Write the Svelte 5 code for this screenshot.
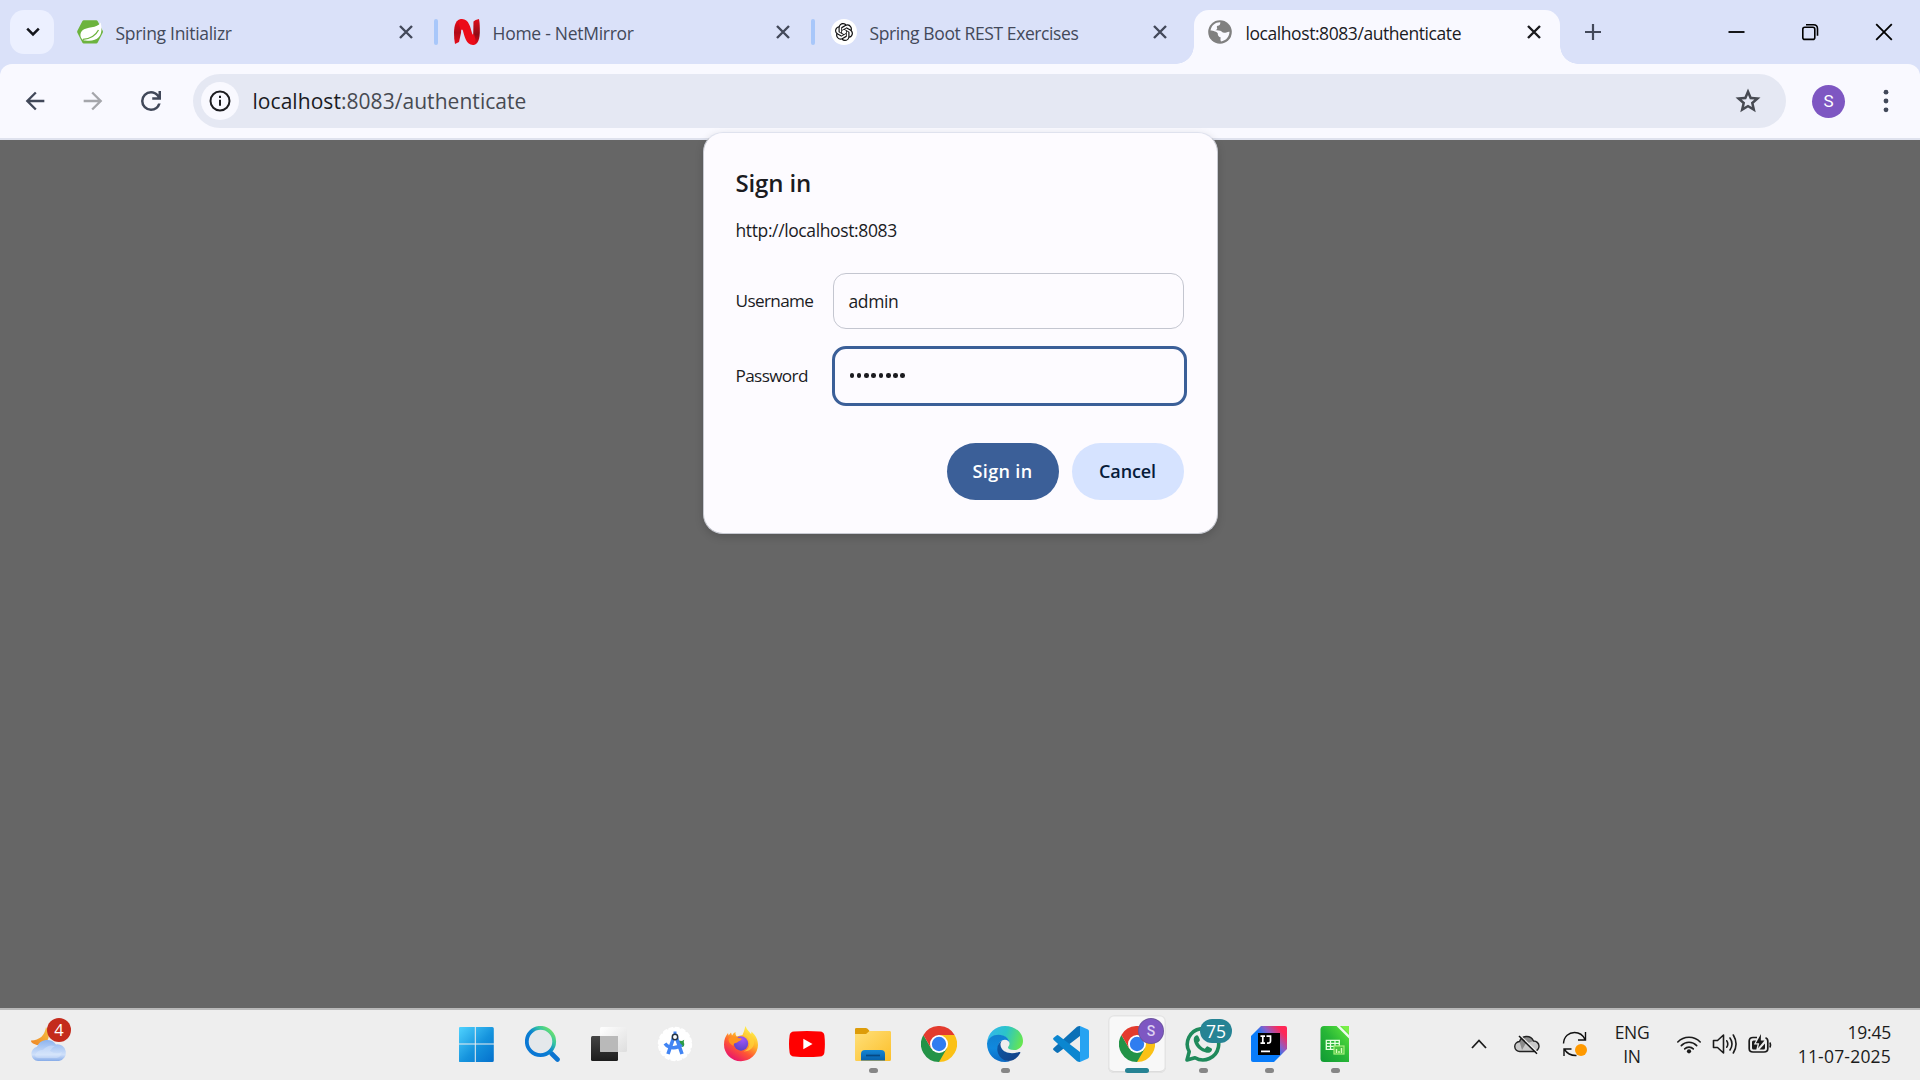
<script>
  const tabs = [
    { title: 'Spring Initializr', icon: 'spring', cls: 't1', sep: true },
    { title: 'Home - NetMirror', icon: 'net', cls: 't2', sep: true },
    { title: 'Spring Boot REST Exercises', icon: 'gpt', cls: 't3', sep: false },
    { title: 'localhost:8083/authenticate', icon: 'globe', cls: 't4', sep: false, active: true }
  ];
  const apps = [
    { id: 'start' }, { id: 'search' }, { id: 'taskview' }, { id: 'studio' }, { id: 'firefox' },
    { id: 'youtube' }, { id: 'folder', open: true }, { id: 'chrome' }, { id: 'edge', open: true },
    { id: 'vscode' }, { id: 'chrome', active: true, avatar: 'S' }, { id: 'whatsapp', open: true, badge: '75' },
    { id: 'idea', open: true }, { id: 'calc', open: true }
  ];
  const dots = Array.from({ length: 8 });
</script>

{#snippet favicon(name)}
  {#if name === 'spring'}
    <svg width="26" height="26" viewBox="0 0 26 26">
      <path fill="#6cb33e" d="M6.8 1.3h12.4q1 0 1.5.9l5 9.6q.5 1 0 2l-5 9.7q-.5.9-1.5.9H6.8q-1 0-1.5-.9L.4 13.800q-.5-1 0-2l4.900-9.600q.5-.9 1.500-.9z" />
      <path fill="#fff" d="M23.700 3.500c.9 4.500 1.700 10.500-1.800 14.600-3 3.500-8.200 4.200-13.500 3.400-1.200 0-2.400-.4-3.200-1.200-2.400-2.600-2.300-6.300.1-8.800 4-4 15-1.800 18.400-8z" />
      <path fill="none" stroke="#6cb33e" stroke-width="1.300" d="M6 20.300c7-.4 12.500-3.600 15.500-9.300" />
    </svg>
  {:else if name === 'net'}
    <svg width="26" height="26" viewBox="0 0 26 26">
      <defs>
        <linearGradient id="nl" x1="0" y1="0" x2="0" y2="1"><stop offset="0" stop-color="#ef0a18" /><stop offset=".55" stop-color="#b00a18" /><stop offset="1" stop-color="#e80c1a" /></linearGradient>
        <linearGradient id="nr" x1="0" y1="0" x2="0" y2="1"><stop offset="0" stop-color="#e30b19" /><stop offset=".6" stop-color="#8e0c16" /><stop offset="1" stop-color="#ee0a18" /></linearGradient>
      </defs>
      <path fill="url(#nl)" d="M0 14C0 6 2 0 8 0l-1 14-2 9-4 2Q0 20 0 14z" />
      <path fill="url(#nr)" d="M19.500 2.500Q21 .5 25 0q1 5 .8 14c-.3 8-2.800 12-6.800 12z" />
      <path fill="#ec0b19" d="M8 0c7 0 8.500 9 10 14 .6 2 1.600 2.200 1.900.2l1.700 6.800q-.6 5-2.600 5c-6.800 0-8.400-8.500-10-14-.6-2-1.800-2-2.200 0L4.500 3.500Q5.500 0 8 0z" />
    </svg>
  {:else if name === 'gpt'}
    <svg width="26" height="26" viewBox="0 0 26 26">
      <circle cx="13" cy="13" r="13" fill="#fff" />
      <g transform="translate(4 4) scale(.75)"><path fill="#111" d="M22.2819 9.8211a5.9847 5.9847 0 0 0-.5157-4.9108 6.0462 6.0462 0 0 0-6.5098-2.9A6.0651 6.0651 0 0 0 4.9807 4.1818a5.9847 5.9847 0 0 0-3.9977 2.9 6.0462 6.0462 0 0 0 .7427 7.0966 5.98 5.98 0 0 0 .511 4.9107 6.051 6.051 0 0 0 6.5146 2.9001A5.9847 5.9847 0 0 0 13.2599 24a6.0557 6.0557 0 0 0 5.7718-4.2058 5.9894 5.9894 0 0 0 3.9977-2.9001 6.0557 6.0557 0 0 0-.7475-7.0729zm-9.022 12.6081a4.4755 4.4755 0 0 1-2.8764-1.0408l.1419-.0804 4.7783-2.7582a.7948.7948 0 0 0 .3927-.6813v-6.7369l2.02 1.1686a.071.071 0 0 1 .038.052v5.5826a4.504 4.504 0 0 1-4.4945 4.4944zm-9.6607-4.1254a4.4708 4.4708 0 0 1-.5346-3.0137l.142.0852 4.783 2.7582a.7712.7712 0 0 0 .7806 0l5.8428-3.3685v2.3324a.0804.0804 0 0 1-.0332.0615L9.74 19.9502a4.4992 4.4992 0 0 1-6.1408-1.6464zM2.3408 7.8956a4.485 4.485 0 0 1 2.3655-1.9728V11.6a.7664.7664 0 0 0 .3879.6765l5.8144 3.3543-2.0201 1.1685a.0757.0757 0 0 1-.071 0l-4.8303-2.7865A4.504 4.504 0 0 1 2.3408 7.872zm16.5963 3.8558L13.1038 8.364 15.1192 7.2a.0757.0757 0 0 1 .071 0l4.8303 2.7913a4.4944 4.4944 0 0 1-.6765 8.1042v-5.6772a.79.79 0 0 0-.407-.667zm2.0107-3.0231l-.142-.0852-4.7735-2.7818a.7759.7759 0 0 0-.7854 0L9.409 9.2297V6.8974a.0662.0662 0 0 1 .0284-.0615l4.8303-2.7866a4.4992 4.4992 0 0 1 6.6802 4.66zM8.3065 12.863l-2.02-1.1638a.0804.0804 0 0 1-.038-.0567V6.0742a4.4992 4.4992 0 0 1 7.3757-3.4537l-.142.0805L8.704 5.459a.7948.7948 0 0 0-.3927.6813zm1.0976-2.3654l2.602-1.4998 2.6069 1.4998v2.9994l-2.5974 1.4997-2.6067-1.4997Z" /></g>
    </svg>
  {:else}
    <svg width="26" height="26" viewBox="0 0 26 26">
      <circle cx="12" cy="13" r="11.800" fill="#808080" />
      <path fill="#f9f9ff" d="M2.500 11.500C3.500 6 7.500 3 12.300 3.200c.2 2-.6 3.300-2.600 3.600-1 .2-1 1.300-.6 2.200.5 1.200-.8 2-2.200 2.100 2.500.6 5.300 0 6.700 1.500 1 1.200 2.700 1.500 4.700.9 1.300-.4 2.300-1 3.200-.7-.1 5-3.600 9-8.500 9.700-.6-1.300-.8-2.700-.2-3.900-2-.8-3.200-2.200-3-4.200-.8-1.500-4.500-2.700-7.300-2.900z" />
    </svg>
  {/if}
{/snippet}

{#snippet app(id)}
  {#if id === 'start'}
    <svg width="36" height="36" viewBox="0 0 36 36">
      <defs><linearGradient id="ws" x1="0" y1="0" x2="1" y2="1"><stop offset="0" stop-color="#4fd3ff" /><stop offset=".55" stop-color="#1593dd" /><stop offset="1" stop-color="#0470cc" /></linearGradient></defs>
      <g transform="translate(-1.200 0)"><path fill="url(#ws)" d="M2.500 1H17v16.500H1V2.500Q1 1 2.500 1zM18 1h16.500Q36 1 36 2.500v15H18zM1 18.500h16V36H2.500Q1 36 1 34.500zM18 18.500h18v16q0 1.500-1.500 1.500H18z" /></g>
    </svg>
  {:else if id === 'search'}
    <svg width="36" height="36" viewBox="0 0 36 36">
      <defs><linearGradient id="sg" x1=".9" y1=".1" x2=".3" y2=".7"><stop offset="0" stop-color="#6be06f" /><stop offset=".3" stop-color="#36c5a0" /><stop offset=".65" stop-color="#0b84d0" /><stop offset="1" stop-color="#0a78d4" /></linearGradient></defs>
      <path d="M26.500 27.500l6 6" stroke="#0c74d0" stroke-width="4.600" stroke-linecap="round" />
      <circle cx="15.500" cy="15.500" r="13.700" fill="#e4e8eb" stroke="url(#sg)" stroke-width="3.800" />
    </svg>
  {:else if id === 'taskview'}
    <svg width="36" height="36" viewBox="0 0 36 36">
      <defs>
        <linearGradient id="tv" x1="0" y1="0" x2="0" y2="1"><stop offset="0" stop-color="#444" /><stop offset="1" stop-color="#1c1c1c" /></linearGradient>
        <linearGradient id="tl" x1="0" y1="0" x2="1" y2="1"><stop offset="0" stop-color="#fff" /><stop offset="1" stop-color="#dedede" /></linearGradient>
      </defs>
      <rect x="0" y="10" width="27" height="25" rx="1.500" fill="url(#tv)" />
      <rect x="9" y="1" width="27" height="25" rx="1.500" fill="url(#tl)" />
      <path d="M9 10h18v16H10.500Q9 26 9 24.500z" fill="#b9b9b9" />
    </svg>
  {:else if id === 'studio'}
    <svg width="36" height="36" viewBox="0 0 36 36">
      <circle cx="18" cy="18" r="16.300" fill="#fff" stroke="#fff" stroke-width="1.800" stroke-dasharray="3.500 2.900" stroke-linecap="round" />
      <path fill="#2c9c45" d="M21 14.500l4 .5 2.200-1.300-.5 2.300q1.600 3.500-1 5L21 19z" />
      <path d="M16.500 12L11 28M19.500 12L25 28M8 17.500c4 5.500 12 5.500 16.500 1" stroke="#4285f4" stroke-width="3.600" fill="none" />
      <path d="M18 5.500v4" stroke="#4285f4" stroke-width="3" />
      <circle cx="18" cy="11" r="2.700" fill="#fff" stroke="#243344" stroke-width="1.500" />
    </svg>
  {:else if id === 'firefox'}
    <svg width="36" height="36" viewBox="0 0 36 36">
      <defs>
        <linearGradient id="ff" x1=".85" y1=".1" x2=".3" y2="1"><stop offset="0" stop-color="#fff44f" /><stop offset=".35" stop-color="#ffb528" /><stop offset=".65" stop-color="#ff5634" /><stop offset="1" stop-color="#e8116f" /></linearGradient>
        <radialGradient id="fp" cx=".6" cy=".2" r=".9"><stop offset="0" stop-color="#a155f7" /><stop offset="1" stop-color="#5341c0" /></radialGradient>
      </defs>
      <path fill="url(#ff)" d="M22.500 0c1 3.500 4 5.500 5.500 8 .5-.7.500-1.500.3-2.500 4.500 3.500 6.700 8.700 6.700 13.500A17 16.500 0 0 1 1 18.500c0-4.800 1.500-8.500 4-11.500l.6 2.500L8 6.500l1 3q1.500-3 3.500-3.500-.5 2.500 1 4.500l6-1.500q1.800-4 3-9z" />
      <circle cx="18" cy="17.500" r="7.200" fill="url(#fp)" />
      <path fill="#ff9320" d="M5.500 13c3-3 6-2.800 8.500-2.200 1 1.700 3 1.500 4.700 1.700 0 2-3 2.500-4 3.500-1.200 1.500-4.700.5-4.200 4C7 18 5.500 16 5.500 13z" />
      <path fill="#ffd23a" d="M20 9c5 1 7.500 5 6.500 10-.5 3-3 5.500-6 6.500 7 0 11-4.500 10.500-10-.5-4-3-5.500-5-8z" opacity=".75" />
    </svg>
  {:else if id === 'youtube'}
    <svg width="36" height="36" viewBox="0 0 36 36"><path fill="#f00" d="M5 5.500q13-1 26 0 4 .3 4.400 4 1 8.500 0 17-.4 3.700-4.400 4-13 1-26 0-4-.3-4.400-4-1.200-8.500 0-17 .4-3.700 4.400-4z" /><path fill="#fff" d="M14.300 12.800l9.200 5.200-9.200 5.200z" /></svg>
  {:else if id === 'folder'}
    <svg width="36" height="36" viewBox="0 0 36 36">
      <defs>
        <linearGradient id="fo" x1="0" y1="0" x2="1" y2="1"><stop offset="0" stop-color="#ffe07a" /><stop offset="1" stop-color="#fcbf2a" /></linearGradient>
        <linearGradient id="fb" x1="0" y1="0" x2="0" y2="1"><stop offset="0" stop-color="#1385d4" /><stop offset="1" stop-color="#0861ab" /></linearGradient>
      </defs>
      <path fill="#dd9c09" d="M0 3q0-1 1.500-1H11q1.500 0 3.500 3v3H0z" />
      <path fill="url(#fo)" d="M0 8h11l3.500-3H35q1 0 1 1.500v27q0 1.500-1.500 1.500h-33Q0 35 0 33.500z" />
      <path fill="url(#fb)" d="M6 34.500V28q0-4 4-4h16q4 0 4 4v6.500z" /><path d="M11 29.500h14" stroke="#064983" stroke-width="1.700" />
    </svg>
  {:else if id === 'chrome'}
    <svg width="36" height="36" viewBox="0 0 36 36">
      <path fill="#fbc116" d="M18 9h15.600A18 18 0 0 1 18 36l3-12z" />
      <path fill="#239347" d="M2.400 9A18 18 0 0 0 18 36l7.800-13.500-7.800-1-7.800 1z" />
      <path fill="#e33b2e" d="M2.400 9L10.200 22.500 12 14l6-5H33.600A18 18 0 0 0 2.400 9z" />
      <circle cx="18" cy="18" r="9" fill="#fff" /><circle cx="18" cy="18" r="7.200" fill="#2f7df0" />
    </svg>
  {:else if id === 'edge'}
    <svg width="36" height="36" viewBox="0 0 36 36">
      <defs>
        <linearGradient id="ea" x1="0" y1=".3" x2="1" y2=".5"><stop offset="0" stop-color="#34b7ee" /><stop offset=".5" stop-color="#2bc4c9" /><stop offset="1" stop-color="#66e651" /></linearGradient>
        <linearGradient id="eb" x1=".4" y1="0" x2=".4" y2="1"><stop offset="0" stop-color="#1180cf" /><stop offset=".5" stop-color="#1089de" /><stop offset="1" stop-color="#0c6ac4" /></linearGradient>
        <linearGradient id="ec" x1="0" y1="0" x2="1" y2="1"><stop offset="0" stop-color="#0b5aa8" /><stop offset="1" stop-color="#143f85" /></linearGradient>
      </defs>
      <path fill="url(#ea)" d="M0 17.500C.5 7 8.500 0 18 0c10.500 0 18 7 18 15 0 6-4.500 9-9 9-4 0-6-1.200-6-2.500 0-1 1.500-1.700 1.500-4C22.500 13 18 9.500 12 9.500 5.500 9.500 1 13 0 17.500z" />
      <path fill="url(#eb)" d="M0 17.500C1 12 6 8.700 11.500 8.700c6.500 0 11 4 11 8.500-.3-2-2.300-3.500-4.500-3.500-4.500 0-7.500 4.500-7 9.500.6 6.500 6 11.500 12 12q-2.500.8-5 .8C7.500 36 0 28 0 17.500z" />
      <path fill="url(#ec)" d="M15 14.500c-1.800 2-2 5-.6 7.500C17 27 24.500 28.500 32 26c1.300-.4 1.800.3 1 1.500C28.500 35 21.500 36.500 17 34 9.500 30.500 7.500 19 15 14.500z" />
    </svg>
  {:else if id === 'vscode'}
    <svg width="36" height="36" viewBox="0 0 36 36">
      <path fill="#0b70b7" d="M27 0v10L5.500 26.500q-1 .8-2 .1L.7 24.300q-1.200-1.100 0-2.200L24 .8Q25.200 0 27 0z" />
      <path fill="#0b86d0" d="M27 36V26L5.500 9.500q-1-.8-2-.1L.7 11.700q-1.200 1.100 0 2.200L24 35.200q1.200.8 3 .8z" />
      <path fill="#27a3f2" d="M27 0l8 3.500q1 .5 1 1.700v25.600q0 1.200-1 1.700L27 36z" />
    </svg>
  {:else if id === 'whatsapp'}
    <svg width="36" height="36" viewBox="0 0 36 36">
      <path fill="#eeeeee" stroke="#1f8a5b" stroke-width="3.600" stroke-linejoin="round" d="M2 34l2.200-8.300A15.700 15.700 0 1 1 10 31.700z" />
      <path fill="#1f8a5b" d="M11 9.500q1.700-.6 2.500 1l1.300 3q.3.800-.3 1.500l-1.300 1.500c1.500 3 3.600 5 6.600 6.300l1.700-2q.6-.7 1.400-.3l3.400 1.700q1 .5.700 1.500c-.6 2.600-3 3.500-5.300 3C15.500 25.500 10.500 21 9 15.500 8.300 13 9 10.300 11 9.500z" />
    </svg>
  {:else if id === 'idea'}
    <svg width="36" height="36" viewBox="0 0 36 36">
      <defs><linearGradient id="ij" x1=".2" y1=".75" x2=".95" y2=".1"><stop offset=".35" stop-color="#087cfa" /><stop offset=".6" stop-color="#8a5fc8" /><stop offset=".9" stop-color="#fe2857" /></linearGradient></defs>
      <path fill="url(#ij)" d="M10 0h24q2 0 2 2v21L23 36H2q-2 0-2-2V10z" />
      <rect x="7" y="7" width="22" height="22" fill="#000" />
      <path d="M9.500 10.200h4.500M9.500 17.200h4.500M11.800 10v7M15.500 10.200h4V15q0 2.300-3.500 2M10 25.300h9" stroke="#fff" stroke-width="1.700" fill="none" />
    </svg>
  {:else if id === 'calc'}
    <svg width="36" height="36" viewBox="0 0 36 36">
      <defs><linearGradient id="lc" x1="0" y1="1" x2="1" y2="0"><stop offset="0" stop-color="#109a34" /><stop offset=".5" stop-color="#27b637" /><stop offset="1" stop-color="#62e93c" /></linearGradient></defs>
      <path fill="url(#lc)" d="M7 0h25v36H7q-3.500 0-3.500-3.500v-29Q3.500 0 7 0z" />
      <path fill="#fff" d="M19.500 0h3.500l9 9v3.500z" opacity=".9" /><path fill="#7af047" d="M24 0h8v8z" />
      <path d="M9.300 14.300h13v9h-13zM9.300 17.300h13M9.300 20.300h13M13.500 14.300v9M18 14.300v9" stroke="#e6ffe0" stroke-width="1.300" fill="none" />
      <rect x="17" y="20" width="10" height="8" fill="#4ac440" stroke="#a5f07c" stroke-width="1.200" /><path d="M19.500 27v-4M22 27v-2M24.500 27v-5" stroke="#d5ffb8" stroke-width="1.400" />
    </svg>
  {/if}
{/snippet}

<div class="screen">
  <header class="strip">
    <div class="search-tabs"><svg width="14" height="10" viewBox="0 0 14 10"><path d="M1.200 1.700L7 7.500l5.800-5.800" fill="none" stroke="#15171c" stroke-width="2.500" /></svg></div>
    <nav class="tabs">
      {#each tabs as t}
        <div class="tab {t.cls}" class:active={t.active}>
          <span class="fav">{@render favicon(t.icon)}</span>
          <span class="title">{t.title}</span>
          <svg class="x" width="16" height="16" viewBox="0 0 16 16"><path d="M2 2l12 12M14 2L2 14" stroke="currentColor" stroke-width="2.400" /></svg>
          {#if t.sep}<i class="sep"></i>{/if}
        </div>
      {/each}
    </nav>
    <svg class="plus" width="18" height="18" viewBox="0 0 18 18"><path d="M9 1v16M1 9h16" stroke="#43495a" stroke-width="2.200" /></svg>
    <div class="win">
      <svg width="18" height="18" viewBox="0 0 18 18"><path d="M1.500 9h16" stroke="#000" stroke-width="1.800" /></svg>
      <svg width="18" height="18" viewBox="0 0 18 18" fill="none" stroke="#000" stroke-width="1.600"><rect x="1.800" y="4.200" width="12" height="12.200" rx="2" /><path d="M5 1.800h7.500q4 0 4 4v7" /></svg>
      <svg width="18" height="18" viewBox="0 0 18 18"><path d="M1.200 1.200l15.600 15.600M16.800 1.200L1.200 16.800" stroke="#000" stroke-width="1.800" /></svg>
    </div>
  </header>

  <div class="toolbar-back">
    <div class="toolbar">
      <svg class="back" width="28" height="28" viewBox="0 0 24 24"><path fill="#414859" d="M20 11H7.830l5.590-5.590L12 4l-8 8 8 8 1.410-1.410L7.830 13H20v-2z" /></svg>
      <svg class="fwd" width="28" height="28" viewBox="0 0 24 24"><path fill="#a5a6ab" d="M4 13h12.170l-5.590 5.590L12 20l8-8-8-8-1.410 1.410L16.170 11H4v2z" /></svg>
      <svg class="reload" width="30" height="30" viewBox="0 0 24 24"><path fill="#414859" d="M12 20q-3.350 0-5.675-2.325Q4 15.350 4 12q0-3.350 2.325-5.675Q8.650 4 12 4q1.725 0 3.300.712Q16.875 5.425 18 6.750V4h2v7h-7V9h4.200q-.8-1.400-2.187-2.200Q13.625 6 12 6 9.500 6 7.750 7.750T6 12q0 2.500 1.750 4.250T12 18q1.925 0 3.475-1.100T17.650 14h2.100q-.7 2.650-2.850 4.325Q14.750 20 12 20Z" /></svg>
      <div class="omnibox">
        <span class="info"><svg width="22" height="22" viewBox="0 0 22 22"><circle cx="11" cy="11" r="9.500" fill="none" stroke="#1b1b1f" stroke-width="2" /><path d="M11 9.700v6M11 5.700v2.200" stroke="#1b1b1f" stroke-width="2" /></svg></span>
        <span class="url"><b>localhost</b>:8083/authenticate</span>
        <svg class="star" width="30" height="30" viewBox="0 0 24 24"><path fill="#474a52" d="M8.850 16.825l3.150-1.900 3.150 1.925-.825-3.600 2.775-2.400-3.650-.325-1.450-3.400-1.450 3.375-3.650.325 2.775 2.425zM5.825 21l1.625-7.025L2 9.250l7.200-.625L12 2l2.800 6.625 7.200.625-5.450 4.725L18.175 21 12 17.275z" /></svg>
      </div>
      <span class="avatar">S</span>
      <svg class="menu" width="6" height="24" viewBox="0 0 6 24" fill="#414859"><circle cx="3" cy="3.200" r="2.400" /><circle cx="3" cy="12" r="2.400" /><circle cx="3" cy="20.800" r="2.400" /></svg>
    </div>
  </div>

  <main>
    <section class="dialog">
      <h1>Sign in</h1>
      <p class="origin">http://localhost:8083</p>
      <div class="row"><label for="user">Username</label><div id="user" class="field"><span>admin</span></div></div>
      <div class="row second"><label for="pass">Password</label><div id="pass" class="field focus">{#each dots as _}<i></i>{/each}</div></div>
      <div class="actions"><button class="primary">Sign in</button><button class="cancel">Cancel</button></div>
    </section>
  </main>

  <footer>
    <div class="weather">
      <svg width="38" height="36" viewBox="0 0 38 36">
        <defs>
          <linearGradient id="mo" x1="1" y1="0" x2="0" y2="1"><stop offset="0" stop-color="#f6c141" /><stop offset="1" stop-color="#ee8424" /></linearGradient>
          <linearGradient id="cl" x1="0" y1="0" x2="0" y2="1"><stop offset="0" stop-color="#8db4ee" /><stop offset=".7" stop-color="#cfe0fa" /><stop offset="1" stop-color="#86abe8" /></linearGradient>
        </defs>
        <path fill="url(#mo)" d="M16 1q5 8 1 14.500T3 17.500Q.5 16 1 14.500 14 14 16 1z" />
        <path fill="url(#cl)" d="M8 35A7.200 7.200 0 0 1 7 20.800 11 11 0 0 1 26 18.500 8.300 8.300 0 0 1 29 35z" />
        <path fill="#dfeafc" d="M5 29q2-5 8-5 5-6 12-4-4 2-5 5 6 4 12 1-1 5-5 6H9q-4 0-4-3z" opacity=".4" />
      </svg>
      <span class="count">4</span>
    </div>
    <div class="apps">
      {#each apps as a}
        <div class="cell" class:on={a.active}>
          <div class="tile">
            {@render app(a.id)}
            {#if a.avatar}<span class="prof">{a.avatar}</span>{/if}
            {#if a.badge}<span class="num">{a.badge}</span>{/if}
          </div>
          <i class="mark" class:show={a.open || a.active}></i>
        </div>
      {/each}
    </div>
    <div class="tray">
      <svg class="chev" width="16" height="10" viewBox="0 0 16 10"><path d="M1 9l7-7.500L15 9" fill="none" stroke="#1b1b1b" stroke-width="1.800" /></svg>
      <svg class="cloud" width="26" height="22" viewBox="0 0 26 22">
        <path fill="#c9c9c9" d="M6 18.500a5 5 0 0 1-.5-10A7.500 7.500 0 0 1 19.500 8a5.200 5.200 0 0 1 .5 10.500z" />
        <path fill="#8b8b8b" d="M5.500 8.500A7.500 7.500 0 0 1 19.500 8l-8 3L8 17z" />
        <path d="M6 18.500a5 5 0 0 1-.5-10A7.500 7.500 0 0 1 19.500 8a5.200 5.200 0 0 1 .5 10.500z" fill="none" stroke="#222" stroke-width="1.400" />
        <path d="M6 2.500l18 17.500" stroke="#eee" stroke-width="1.600" /><path d="M5 3l18 17.800" stroke="#111" stroke-width="1.500" />
      </svg>
      <svg class="sync" width="26" height="28" viewBox="0 0 26 28"><path d="M1.500 13.500C2 6 7 2.500 12.500 2.500c5 0 8.500 2.500 10.500 7M23.500 2v8H16M2 26v-7h7.500M2.500 19.500q4 6.300 12 6" fill="none" stroke="#111" stroke-width="1.400" /><circle cx="19" cy="20" r="6" fill="#ff9900" /></svg>
      <div class="lang"><span>ENG</span><span>IN</span></div>
      <svg class="wifi" width="26" height="20" viewBox="0 0 26 20"><g fill="none" stroke="#1b1b1b" stroke-width="1.600" stroke-linecap="round"><path d="M1.800 8a15.500 15.500 0 0 1 22.400 0M5.300 11.600a10.600 10.600 0 0 1 15.400 0M8.700 14.900a6 6 0 0 1 8.600 0" /></g><circle cx="13" cy="17.300" r="2.100" fill="#1b1b1b" /></svg>
      <svg class="vol" width="26" height="22" viewBox="0 0 26 22"><path d="M1.500 7.500h4l6-5.500v18l-6-5.500h-4zM14.800 7.800q2 3.200 0 6.400M18 5q4 6 0 12M21.300 2q5.500 9 0 18" fill="none" stroke="#1b1b1b" stroke-width="1.600" stroke-linejoin="round" stroke-linecap="round" /></svg>
      <svg class="batt" width="24" height="22" viewBox="0 0 24 22"><path d="M9 4.500H5Q1.200 4.500 1.200 8v7.500Q1.200 19 5 19h11q3.800 0 3.800-3.500V8q0-2.500-2.300-3.300" fill="none" stroke="#1b1b1b" stroke-width="1.700" /><path d="M22 9.500q1 2.500 0 5" fill="none" stroke="#1b1b1b" stroke-width="1.700" /><path fill="#1b1b1b" d="M5.500 7.500h2.500L5.800 11.500h3.700l-1.200 5H5.500Q4 16.500 4 15V9q0-1.500 1.500-1.500zM17 10.500v4.500q0 1.500-1.500 1.500h-4zM13 1L7.800 10.300h3.400l-1.200 5L16.500 7.500h-3.700z" /></svg>
      <div class="clock"><span class="time">19:45</span><span class="date">11-07-2025</span></div>
    </div>
  </footer>
</div>

<style>
  :global(body) { margin: 0; overflow: hidden; }
  .screen { width: 1920px; height: 1080px; display: flex; flex-direction: column; background: #666; font-family: 'Open Sans', 'Noto Sans', sans-serif; color: #1b1b1f; overflow: hidden; }
  svg { display: block; flex: none; }
  i { font-style: normal; }
  .strip { height: 64px; flex: none; background: #dae1f9; display: flex; align-items: center; padding-left: 10px; box-sizing: border-box; }
  .search-tabs { width: 44px; height: 44px; border-radius: 14px; background: #ecf0ff; display: flex; align-items: center; justify-content: center; margin-right: 10px; padding-left: 2px; box-sizing: border-box; }
  .tabs { display: flex; align-self: stretch; }
  .tab { width: 377px; box-sizing: border-box; display: flex; align-items: center; padding-left: 13px; color: #43495a; }
  .fav { width: 26px; height: 26px; margin-right: 12.500px; flex: none; }
  .title { flex: 1; font-size: 17.500px; line-height: 24px; white-space: nowrap; padding-top: 1px; }
  .t1 .title { letter-spacing: -.3px; }
  .t2 .title { letter-spacing: -.27px; }
  .t3 .title { letter-spacing: -.4px; }
  .t4 .title { letter-spacing: -.43px; }
  .x { margin-right: 27px; }
  .sep { width: 4px; height: 26px; border-radius: 2px; background: #a8c7fa; margin: 0 3px 0 -7px; }
  .active { width: 366px; position: relative; margin: 10px 0 0 -1px; height: 54px; background: #f9f9ff; border-radius: 15px 15px 0 0; color: #1b1b1f; padding: 0 0 10px 14px; }
  .active .fav { margin-right: 11.500px; }
  .active .x { margin-right: 18px; }
  .active::before, .active::after { content: ''; position: absolute; bottom: 0; width: 18px; height: 18px; }
  .active::before { left: -18px; background: radial-gradient(circle at 0 0, transparent 17.500px, #f9f9ff 18px); }
  .active::after { right: -18px; background: radial-gradient(circle at 100% 0, transparent 17.500px, #f9f9ff 18px); }
  .plus { margin-left: 24px; }
  .win { display: flex; gap: 56px; margin-left: auto; padding-right: 27px; }
  .toolbar-back { background: #dae1f9; flex: none; }
  .toolbar { height: 76px; box-sizing: border-box; border-bottom: 2px solid #dfe2ee; background: #f9f9ff; border-radius: 12px 12px 0 0; display: flex; align-items: center; padding-left: 21px; }
  .fwd { margin-left: 30px; }
  .reload { margin-left: 29px; }
  .omnibox { width: 1593px; height: 54px; margin-left: 27px; border-radius: 27px; background: #e5e8f3; display: flex; align-items: center; padding: 0 23px 0 8px; box-sizing: border-box; }
  .info { width: 38px; height: 38px; border-radius: 50%; background: #f9f9ff; display: flex; align-items: center; justify-content: center; }
  .url { margin-left: 13.500px; flex: 1; font-size: 21px; color: #474a52; letter-spacing: .05px; }
  .url b { font-weight: 400; color: #1b1b1f; }
  .avatar { width: 33px; height: 33px; margin-left: 26px; border-radius: 50%; background: #7e57c2; color: #fff; display: flex; align-items: center; justify-content: center; font: 17px Roboto, sans-serif; }
  .menu { margin-left: 38px; }
  main { flex: 1; background: #666; display: flex; justify-content: center; align-items: flex-start; }
  .dialog { width: 515px; height: 402px; margin-top: -8px; box-sizing: border-box; background: #fdfbff; border: 1.500px solid #c8cad2; border-top-color: #dfe2ee; border-radius: 20px; padding: 33px 31px 0 32px; box-shadow: 0 3px 8px rgba(0, 0, 0, .16); position: relative; }
  h1 { margin: 0; font-size: 24px; line-height: 34px; font-weight: 600; letter-spacing: -.15px; }
  .origin { margin: 17px 0 0; font-size: 17.500px; line-height: 26px; letter-spacing: -.38px; }
  .row { display: flex; align-items: center; margin-top: 30px; height: 56px; font-size: 17.500px; letter-spacing: -.4px; }
  .row label { width: 97px; flex: none; font-size: 17.200px; letter-spacing: -.65px; padding-bottom: 1px; }
  .field { width: 351px; height: 56px; box-sizing: border-box; border: 1.500px solid #c4c6d0; border-radius: 13px; display: flex; align-items: center; padding: 0 0 1px 15px; flex: none; }
  .second { margin-top: 19px; }
  .focus { width: 355px; height: 60px; margin-left: -1px; border: 3px solid #3b5f98; border-radius: 14px; gap: 2.700px; }
  .focus i { width: 4.600px; height: 4.600px; border-radius: 50%; background: #1b1b1f; }
  .actions { display: flex; justify-content: flex-end; gap: 13px; margin-top: 39px; padding-right: 2px; }
  button { width: 112px; height: 57px; border: 0; border-radius: 29px; padding: 0 0 2px; font: 600 18px 'Open Sans', sans-serif; letter-spacing: -.1px; }
  .primary { background: #3b5f98; color: #fff; letter-spacing: .35px; }
  .cancel { background: #d6e3ff; color: #071b3a; }
  footer { height: 72px; box-sizing: border-box; border-top: 2px solid #b9b9b9; background: #eee; display: flex; flex: none; color: #1b1b1b; }
  .weather { width: 444px; padding: 16px 0 0 29.500px; box-sizing: border-box; position: relative; }
  .count { position: absolute; left: 47px; top: 8px; width: 24px; height: 24px; border-radius: 50%; background: #c42b1c; color: #fff; font-size: 16.500px; line-height: 24px; text-align: center; }
  .apps { display: flex; }
  .cell { width: 66px; height: 70px; display: flex; flex-direction: column; align-items: center; padding-top: 5px; box-sizing: border-box; }
  .tile { position: relative; width: 58px; height: 58px; box-sizing: border-box; padding: 11px; border-radius: 6px; }
  .on .tile { background: #f8f8f8; box-shadow: inset 0 0 0 1.500px #e4e4e4, inset 0 -2px 0 #d4d4d4; }
  .mark { width: 9px; height: 5px; border-radius: 3px; background: #868686; margin-top: -5px; visibility: hidden; position: relative; }
  .mark.show { visibility: visible; }
  .on .mark { width: 24px; background: #268394; }
  .prof { position: absolute; left: 31px; top: 4px; width: 24px; height: 24px; border-radius: 50%; background: #7e57c2; color: #ddd0f2; font: 500 14px/24px Roboto, sans-serif; text-align: center; box-shadow: 0 0 0 1px #6d55a0; }
  .num { position: absolute; left: 26px; top: 4px; width: 32px; height: 24px; border-radius: 12px; background: #268394; color: #fff; font-size: 17.500px; line-height: 24px; text-align: center; }
  .tray { display: flex; align-items: center; margin-left: auto; padding: 0 29px 2px 0; height: 70px; box-sizing: border-box; font-size: 17px; line-height: 24px; }
  .cloud { margin-left: 27px; }
  .sync { margin-left: 22px; }
  .lang { margin-left: 24px; width: 40px; display: flex; flex-direction: column; align-items: center; font-size: 17.500px; letter-spacing: -.3px; }
  .wifi { margin-left: 24px; }
  .vol { margin-left: 10px; }
  .batt { margin-left: 10px; }
  .clock { width: 119px; display: flex; flex-direction: column; align-items: flex-end; font-size: 17.500px; letter-spacing: -.2px; }
  .date { letter-spacing: .2px; }
</style>
